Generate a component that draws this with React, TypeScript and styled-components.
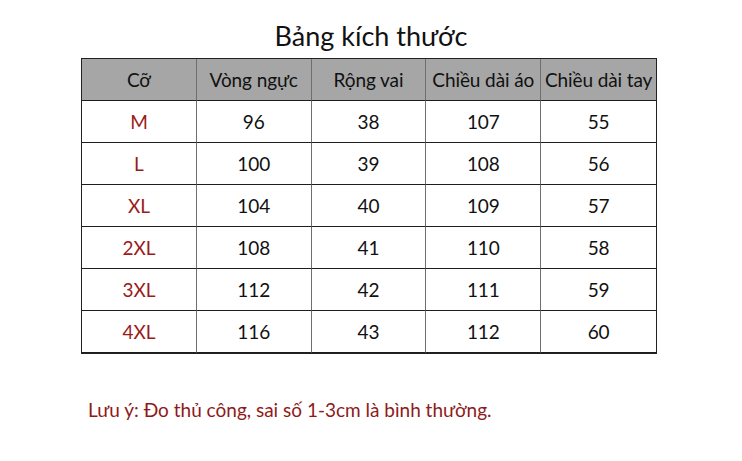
import React from 'react';
import styled, { createGlobalStyle } from 'styled-components';

const GlobalStyle = createGlobalStyle`
  html, body { margin: 0; padding: 0; background: #fff; }
  body { font-family: Lato, "Noto Sans", sans-serif; }
`;

const Page = styled.div`
  width: 742px;
  height: 461px;
  box-sizing: border-box;
  padding-top: 20px;
  display: flex;
  flex-direction: column;
`;

const Title = styled.h1`
  margin: 0 0 6px;
  height: 32px;
  line-height: 32px;
  text-align: center;
  font-size: 27px;
  font-weight: 400;
  color: #111;
`;

const Table = styled.div`
  margin-left: 81px;
  width: 576px;
  display: grid;
  grid-template-columns: repeat(5, 1fr);
  border: 1px solid #222;
  box-sizing: border-box;
`;

const Cell = styled.div<{ $head?: boolean; $size?: boolean; $last?: boolean }>`
  height: 42px;
  display: flex;
  align-items: center;
  justify-content: center;
  box-sizing: border-box;
  border-bottom: 1px solid #1e1e1e;
  border-right: ${p => (p.$last ? 'none' : '1.5px solid #6e6e6e')};
  background: ${p => (p.$head ? '#a6a6a6' : '#fff')};
  font-size: 19px;
  color: ${p => (p.$size ? '#9a1b1b' : '#111')};
  white-space: nowrap;
  letter-spacing: -0.1px;
`;

const Note = styled.p`
  margin: 44px 0 0 88px;
  font-size: 19px;
  color: #8e1a1a;
`;

const headers = ['Cỡ', 'Vòng ngực', 'Rộng vai', 'Chiều dài áo', 'Chiều dài tay'];
const rows = [
  ['M', '96', '38', '107', '55'],
  ['L', '100', '39', '108', '56'],
  ['XL', '104', '40', '109', '57'],
  ['2XL', '108', '41', '110', '58'],
  ['3XL', '112', '42', '111', '59'],
  ['4XL', '116', '43', '112', '60'],
];

export default function App() {
  return (
    <>
      <GlobalStyle />
      <Page>
        <Title>Bảng kích thước</Title>
        <Table>
          {headers.map((h, i) => (
            <Cell key={h} $head $last={i === 4}>{h}</Cell>
          ))}
          {rows.map(r =>
            r.map((v, i) => (
              <Cell key={r[0] + i} $size={i === 0} $last={i === 4}>{v}</Cell>
            ))
          )}
        </Table>
        <Note>Lưu ý: Đo thủ công, sai số 1-3cm là bình thường.</Note>
      </Page>
    </>
  );
}
